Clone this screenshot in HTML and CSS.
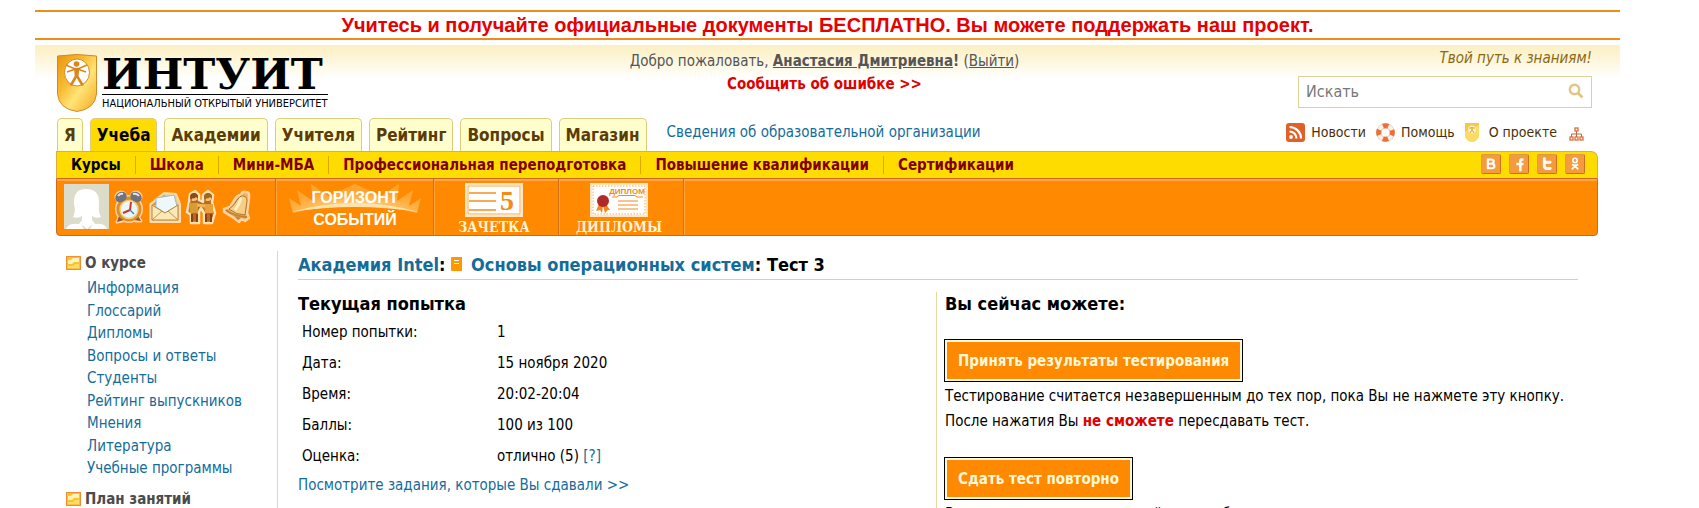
FILE: index.html
```
<!DOCTYPE html>
<html lang="ru">
<head>
<meta charset="utf-8">
<title>ИНТУИТ — Основы операционных систем: Тест 3</title>
<link rel="stylesheet" href="styles.css">
</head>
<body>
<div class="page">
  <a class="promo" href="#">Учитесь и получайте официальные документы БЕСПЛАТНО. Вы можете поддержать наш проект.</a>

  <header class="top">
    <a class="logo" href="#">
      <svg class="logo-shield" viewBox="0 0 40 58" aria-hidden="true">
        <defs>
          <linearGradient id="gold" x1="0" y1="0" x2="1" y2="1">
            <stop offset="0" stop-color="#e8940f"/><stop offset=".35" stop-color="#f9b92f"/>
            <stop offset=".6" stop-color="#ffe477"/><stop offset="1" stop-color="#f6a81c"/>
          </linearGradient>
        </defs>
        <path d="M.5 2Q20-1 39.500 2V40Q38 55 20 57.500Q2 55 .5 40Z" fill="url(#gold)" stroke="#cf8a2c"/>
        <ellipse cx="20" cy="18.500" rx="12.500" ry="13.500" fill="#fff" stroke="#d18a24"/>
        <path d="M9 11L17 14.500H22L30 11M10 18L17 15.500H22L29 18" fill="none" stroke="#d9861c" stroke-width="1.500"/>
        <path d="M17 14H22.500L21.500 22L27 31L24.500 32L19.700 24L15 32L12.500 31L17.700 22Z" fill="#d9861c"/>
        <circle cx="19.500" cy="10" r="2.800" fill="#d9861c"/>
      </svg>
      <span class="logo-text">
        <span class="logo-name">ИНТУИТ</span>
        <span class="logo-sub">НАЦИОНАЛЬНЫЙ ОТКРЫТЫЙ УНИВЕРСИТЕТ</span>
      </span>
    </a>
    <div class="welcome">
      <p>Добро пожаловать, <a href="#"><b>Анастасия Дмитриевна</b></a><b>!</b> (<a href="#">Выйти</a>)</p>
      <p><a class="report" href="#">Сообщить об ошибке &gt;&gt;</a></p>
    </div>
    <div class="tools">
      <p class="slogan">Твой путь к знаниям!</p>
      <form class="search">
        <input type="text" placeholder="Искать" aria-label="Искать">
        <button type="button" aria-label="Найти">
          <svg viewBox="0 0 16 16" width="16" height="16"><circle cx="6.500" cy="6.500" r="4.700" fill="none" stroke="#e3c583" stroke-width="2.400"/><path d="M10 10L14.500 14.500" stroke="#e3c583" stroke-width="2.800"/></svg>
        </button>
      </form>
    </div>
  </header>

  <div class="nav-row">
    <nav class="tabs">
      <a href="#">Я</a><a class="active" href="#">Учеба</a><a href="#">Академии</a><a href="#">Учителя</a><a href="#">Рейтинг</a><a href="#">Вопросы</a><a href="#">Магазин</a>
    </nav>
    <a class="org" href="#">Сведения об образовательной организации</a>
    <nav class="quick">
      <a href="#"><svg viewBox="0 0 19 19" width="19" height="19"><rect width="19" height="19" rx="3" fill="#e0602a"/><circle cx="5" cy="14" r="1.900" fill="#fff"/><path d="M3.500 8.500A7 7 0 0 1 10.500 15.500M3.500 4A11.500 11.500 0 0 1 15 15.500" fill="none" stroke="#fff" stroke-width="2.200"/></svg>Новости</a>
      <a href="#"><svg viewBox="0 0 19 19" width="19" height="19"><circle cx="9.500" cy="9.500" r="6.800" fill="#fff" stroke="#e9b79c" stroke-width="5"/><circle cx="9.500" cy="9.500" r="6.800" fill="none" stroke="#fbf1ea" stroke-width="3.800"/><circle cx="9.500" cy="9.500" r="6.800" fill="none" stroke="#e8713a" stroke-width="5" stroke-dasharray="5.340 5.340" stroke-dashoffset="-2.670" transform="rotate(45 9.500 9.500)"/></svg>Помощь</a>
      <a class="about" href="#"><svg viewBox="0 0 14 19" width="14" height="19"><path d="M0 0H14V13Q13 18 7 19Q1 18 0 13Z" fill="#f5c945"/><path d="M0 9L14 2V13Q13 18 7 19Q1 18 0 13Z" fill="#fbdb65"/><circle cx="7" cy="6.500" r="4" fill="#fff3c4"/><path d="M4 5H10M7 4V7L5 10M7 7L9 10" stroke="#d9a22c" fill="none"/></svg>О проекте</a>
      <a class="map" href="#" aria-label="Карта сайта"><svg viewBox="0 0 15 14" width="15" height="14"><path d="M7.500 4V7M2.500 10V7H12.500V10M7.500 7V10" stroke="#b06a45" fill="none"/><g fill="#fff" stroke="#df6c37" stroke-width="1.300"><rect x="6" y="1" width="3" height="3"/><rect x="1" y="10" width="3" height="3"/><rect x="6" y="10" width="3" height="3"/><rect x="11" y="10" width="3" height="3"/></g></svg></a>
    </nav>
  </div>

  <div class="bar">
    <div class="subnav">
      <nav>
        <a class="active" href="#">Курсы</a><a href="#">Школа</a><a href="#">Мини-МБА</a><a href="#">Профессиональная переподготовка</a><a href="#">Повышение квалификации</a><a href="#">Сертификации</a>
      </nav>
      <div class="social">
        <a href="#" aria-label="ВКонтакте"><svg viewBox="0 0 20 20"><path d="M6.500 5H10Q13 5 13 7.300T10 9.700H6.500ZM6.500 9.700H10.500Q13.800 9.700 13.800 12.200T10.500 14.700H6.500Z" fill="none" stroke="#fff" stroke-width="2.400"/></svg></a>
        <a href="#" aria-label="Facebook"><svg viewBox="0 0 20 20"><path d="M15 5H13Q11.500 5 11.500 7V18M7 10H15" fill="none" stroke="#fff" stroke-width="2.800"/></svg></a>
        <a href="#" aria-label="Twitter"><svg viewBox="0 0 20 20"><path d="M7 4V12Q7 15 10 15H13.500M7 8H13.500" fill="none" stroke="#fff" stroke-width="3.200" stroke-linecap="round"/></svg></a>
        <a href="#" aria-label="Одноклассники"><svg viewBox="0 0 20 20"><circle cx="10" cy="6" r="2.400" fill="none" stroke="#fff" stroke-width="1.800"/><path d="M6.500 10.500Q10 12.500 13.500 10.500M10 12L6.500 16M10 12L13.500 16" fill="none" stroke="#fff" stroke-width="1.900"/></svg></a>
      </div>
    </div>
    <div class="panel">
      <div class="cell user">
        <svg class="avatar" viewBox="0 0 45 45"><rect width="45" height="45" fill="#dddbc9"/><path d="M9 33Q12 28 10 20Q9 5 22 5Q36 5 35 20Q34 28 37 33Q31 35 28 32V36L31 40Q41 39 43 45H2Q4 39 15 40L18 36V32Q14 35 9 33Z" fill="#fff"/><path d="M17 40L23 45L29 40L26 45H20Z" fill="#dddbc9"/></svg>
        <svg class="ico" viewBox="0 0 32 36"><g stroke="#ffd2a0" stroke-width="3" stroke-linejoin="round" fill="#ffd2a0"><circle cx="8" cy="8" r="5"/><circle cx="23" cy="8" r="5"/><path d="M6 28L4 33L10 32M25 28L28 32L22 32"/><circle cx="16" cy="20" r="12.500"/></g><path d="M6 27L4 33L11 31M25 27L28 32L21 31" fill="#8f5a2a"/><circle cx="16" cy="20" r="12.500" fill="#d98e2c"/><ellipse cx="8" cy="8" rx="6" ry="5" fill="#6d7480" transform="rotate(-35 8 8)"/><ellipse cx="23" cy="8" rx="6" ry="5" fill="#6d7480" transform="rotate(35 23 8)"/><circle cx="16" cy="20.500" r="9" fill="#e9f7f9" stroke="#f6cc7a" stroke-width="1.500"/><path d="M18 13L17 21L10 24" fill="none" stroke="#d0342a" stroke-width="2"/><path d="M17 21L21 25" stroke="#4e85b5" stroke-width="1.500"/><path d="M5 7Q7 4 10 5M20 5Q24 4 26 7" stroke="#dfe6ec" stroke-width="2" fill="none"/></svg>
        <svg class="ico" viewBox="0 0 32 36"><path d="M1.500 15L15 4L27 5L31 15V33H1.500Z" fill="#f4c98a" stroke="#ffdcae" stroke-width="2" stroke-linejoin="round"/><path d="M3 16L15 6L29 16Z" fill="#c88d45"/><path d="M7 9L25 6L28 17L16 24L7 18Z" fill="#eef7fa" stroke="#9dbccb"/><path d="M3 16L16 24L29 16V31H3Z" fill="#fbe9b8" stroke="#b9833f"/><path d="M3 31L13 22M29 31L19 22" stroke="#c99345"/></svg>
        <svg class="ico" viewBox="0 0 32 36"><path d="M4 13L5 5L10 2L14 6V11L18 13V6L23 2L28 6L27 13L30 24L27 34H19V24L16 19L14 23V34H6V26L2 23Z" fill="#b66b20" stroke="#ffe3b5" stroke-width="2.500" stroke-linejoin="round"/><circle cx="9" cy="8" r="4" fill="#8b4a19"/><circle cx="23" cy="8" r="4" fill="#a3661b"/><path d="M4 14H13V24H5Z" fill="#d99c33"/><path d="M19 15H28V24H20Z" fill="#eda03a"/><path d="M12 16L20 17" stroke="#f3b45d" stroke-width="3"/><path d="M7 25V33M12 25V33M21 25V33M26 25V33" stroke="#8f3d12" stroke-width="2"/><path d="M7 10Q9 12 12 9M21 10Q23 12 26 9" stroke="#f3c37b" stroke-width="2.500" fill="none"/></svg>
        <svg class="ico" viewBox="0 0 32 36"><path d="M20 6Q21 2 25 3Q29 3 28 9L26 24L28 29L24 32L20 30L18 33L13 29L3 23L3 20L9 18L14 10Q16 6 20 6Z" fill="#e9b565" stroke="#ffd3a0" stroke-width="2.500" stroke-linejoin="round"/><path d="M20 7Q26 6 26 12L24 26Q15 26 8 20Q14 16 16 11Z" fill="#f6cf85" stroke="#b0722e"/><path d="M20 9Q18 16 14 21" stroke="#fff1c4" fill="none" stroke-width="3"/><path d="M5 21Q14 28 26 28" stroke="#c3832f" fill="none" stroke-width="2"/><path d="M13 27L17 31L20 29" fill="#c58234"/></svg>
      </div>
      <a class="cell horizon" href="#">
        <svg viewBox="0 0 136 50" aria-label="Горизонт событий"><defs><radialGradient id="ray" cx=".5" cy=".9" r=".6"><stop offset=".3" stop-color="#ffcf7d"/><stop offset="1" stop-color="#ffc15e" stop-opacity=".5"/></radialGradient></defs><path d="M6 31L2 16L14 24L10 8L26 19L24 2L42 14L68 2L94 14L112 2L110 19L126 8L122 24L134 16L130 31Q68 16 6 31Z" fill="url(#ray)"/><path d="M4 30Q68 12 132 30Q68 20 4 30Z" fill="#ffe3ad"/><g class="horizon-text"><text x="68" y="21" text-anchor="middle">ГОРИЗОНТ</text><text x="68" y="43" text-anchor="middle">СОБЫТИЙ</text></g></svg>
      </a>
      <a class="cell card" href="#">
        <svg viewBox="0 0 58 34"><rect x="1" y="1" width="56" height="32" fill="#fff" stroke="#ffe7c4" stroke-width="2"/><rect x="3" y="3" width="52" height="28" fill="none" stroke="#ffa640"/><path d="M4 10H31M4 18H31M4 27H31" stroke="#f58d1d" stroke-width="1.500"/><text x="42" y="27" class="mark" text-anchor="middle">5</text></svg>
        <span>ЗАЧЕТКА</span>
      </a>
      <a class="cell card" href="#">
        <svg viewBox="0 0 58 34"><rect x="1" y="1" width="56" height="32" fill="#fff" stroke="#ffe7c4" stroke-width="2"/><rect x="3" y="3" width="52" height="28" fill="none" stroke="#f5a957" stroke-dasharray="1.500 1.500"/><text x="37" y="11" class="diploma" text-anchor="middle">ДИПЛОМ</text><path d="M22 14H27L29 12.500H45L47 14H53M28 18H48M28 22H48M28 26H48" fill="none" stroke="#f08a1d"/><path d="M9 21L6 28L10 27L12 30L13 23L15 30L18 27L20 27L16 21Z" fill="#f08a1d"/><circle cx="13" cy="18" r="6" fill="#b02a2a"/></svg>
        <span>ДИПЛОМЫ</span>
      </a>
    </div>
  </div>

  <div class="content">
    <aside class="side">
      <h2><svg viewBox="0 0 15 14"><use href="#folder"/></svg>О курсе</h2>
      <ul>
        <li><a href="#">Информация</a></li>
        <li><a href="#">Глоссарий</a></li>
        <li><a href="#">Дипломы</a></li>
        <li><a href="#">Вопросы и ответы</a></li>
        <li><a href="#">Студенты</a></li>
        <li><a href="#">Рейтинг выпускников</a></li>
        <li><a href="#">Мнения</a></li>
        <li><a href="#">Литература</a></li>
        <li><a href="#">Учебные программы</a></li>
      </ul>
      <h2><svg viewBox="0 0 15 14"><g id="folder"><rect x=".5" y=".5" width="14" height="13" fill="#f9c22f" stroke="#ee8f35"/><path d="M2 8V4H5L7 2H13V6H8L6 8Z" fill="#fff3b5"/><path d="M2 12V10H7L9 8H13V12Z" fill="#fbdc6c"/></g></svg>План занятий</h2>
    </aside>
    <main class="main">
      <h1><a href="#">Академия Intel</a>: <svg viewBox="0 0 11 14"><path d="M1 0H11V14H1Q0 14 0 13V1Q0 0 1 0Z" fill="#ff9800"/><path d="M3 3.500H8M3 6.500H8" stroke="#fff"/></svg><a href="#">Основы операционных систем</a>: Тест 3</h1>
      <div class="columns">
        <section class="attempt">
          <h2>Текущая попытка</h2>
          <table>
            <tr><th scope="row">Номер попытки:</th><td>1</td></tr>
            <tr><th scope="row">Дата:</th><td>15 ноября 2020</td></tr>
            <tr><th scope="row">Время:</th><td>20:02-20:04</td></tr>
            <tr><th scope="row">Баллы:</th><td>100 из 100</td></tr>
            <tr><th scope="row">Оценка:</th><td>отлично (5) <a href="#">[?]</a></td></tr>
          </table>
          <a href="#">Посмотрите задания, которые Вы сдавали &gt;&gt;</a>
        </section>
        <section class="actions">
          <h2>Вы сейчас можете:</h2>
          <button type="button">Принять результаты тестирования</button>
          <p>Тестирование считается незавершенным до тех пор, пока Вы не нажмете эту кнопку.<br>После нажатия Вы <b>не сможете</b> пересдавать тест.</p>
          <button type="button">Сдать тест повторно</button>
          <p>Вы можете пересдать данный тест любое число раз.</p>
        </section>
      </div>
    </main>
  </div>
</div>
</body>
</html>
```
FILE: styles.css
```
* { box-sizing: border-box; }
html, body { height: 100%; }
body {
  margin: 0;
  overflow: hidden;
  background: #fff;
  color: #000;
  font: 15px/1.5 "DejaVu Sans Condensed", "Noto Sans", sans-serif;
}
a { color: #146c9b; text-decoration: none; }
p, h1, h2, ul { margin: 0; padding: 0; }
ul { list-style: none; }
svg { display: block; flex: none; }
.page { padding: 10px 79px 0 35px; }

.promo {
  display: block;
  border: solid #ef8c1c;
  border-width: 2px 0;
  color: #e60000;
  font: bold 20px/26px "Liberation Sans", Arial, sans-serif;
  text-align: center;
}

.top {
  display: grid;
  grid-template-columns: 1fr auto 1fr;
  height: 68px;
  margin-top: 5px;
  padding: 4px 28px 0 22px;
  background: linear-gradient(#fcefc0, #fff 34px);
}
.logo { display: flex; gap: 5px; padding-top: 5px; color: #000; }
.logo-shield { width: 40px; height: 58px; }
.logo-text { display: flex; flex-direction: column; white-space: nowrap; }
.logo-name {
  border-bottom: 1px solid #000;
  font: bold 43px/40px "DejaVu Serif", serif;
}
.logo-sub { font-size: 11px; line-height: 18px; }
.welcome { padding-top: 1px; color: #555; text-align: center; }
.welcome a { color: #555; text-decoration: underline; }
.welcome .report { color: #e00000; font-weight: bold; text-decoration: none; }
.tools { justify-self: end; width: 294px; }
.slogan { color: #8a6914; font-style: italic; line-height: 18px; text-align: right; }
.search {
  display: flex;
  align-items: center;
  height: 32px;
  margin-top: 9px;
  border: 1px solid #e0d296;
  background: #fff;
}
.search input {
  flex: 1;
  min-width: 0;
  padding: 0 7px;
  border: 0;
  outline: 0;
  background: none;
  font: inherit;
  font-size: 16px;
}
.search input::placeholder { color: #777; opacity: 1; }
.search button { padding: 0 7px 2px; border: 0; background: none; }

.nav-row { display: flex; align-items: flex-end; height: 38px; padding: 0 36px 0 22px; }
.tabs { display: flex; gap: 7px; }
.tabs a {
  height: 33px;
  padding: 0 6px;
  border: 1px solid #e0ca7c;
  border-bottom: 0;
  border-radius: 5px 5px 0 0;
  background: #ffffcd;
  color: #5b3c06;
  font-size: 17px;
  font-weight: bold;
  line-height: 32px;
}
.tabs .active { background: #ffdc00; color: #000; }
.org { align-self: center; margin-left: 20px; }
.quick { display: flex; align-items: center; align-self: center; gap: 10px; margin-left: auto; }
.quick a { display: flex; align-items: center; gap: 6px; color: #4b3006; font-size: 14px; }
.quick .about { gap: 10px; }
.quick .map { padding: 4px 0 0 2px; }

.bar { margin: 0 22px 0 21px; }
.subnav {
  display: flex;
  justify-content: space-between;
  height: 27px;
  border: 1px solid #d8b23c;
  border-bottom: 0;
  border-top-right-radius: 7px;
  background: #ffdc00;
}
.subnav nav { display: flex; align-items: center; }
.subnav nav a {
  padding: 0 14px;
  border-left: 1px solid #dba800;
  color: #800000;
  font-weight: bold;
  line-height: 18px;
}
.subnav nav .active { border: 0; color: #000; }
.social { display: flex; gap: 8px; padding: 2px 12px 0 0; }
.social a { width: 20px; height: 20px; border: 1px solid #e39a3c; border-right-color: #cf6f24; border-bottom-color: #cf6f24; border-radius: 2px; background: #f59a3d; }
.panel {
  display: flex;
  height: 58px;
  border: 1px solid #cb6b1f;
  border-radius: 0 0 4px 4px;
  background: #ff8900;
  box-shadow: inset 0 2px #ffa53d;
}
.cell { border-right: 1px solid #d66f13; box-shadow: 1px 0 #ffa53d; }
.user { display: flex; gap: 4px; width: 219px; padding: 5px 7px; }
.avatar { width: 45px; height: 45px; }
.ico { width: 32px; height: 36px; margin-top: 5px; }
.horizon { display: flex; align-items: center; justify-content: center; width: 158px; }
.horizon svg { width: 136px; height: 50px; }
.horizon-text { fill: #fff; font: bold 16px "Liberation Sans", sans-serif; }
.card { display: flex; flex-direction: column; align-items: center; width: 125px; padding: 4px 4px 0 0; color: #fff4d8; font: bold 14px/20px "DejaVu Serif Condensed", "DejaVu Serif", serif; }
.card svg { width: 58px; height: 34px; }
.mark { fill: #f58a14; font: bold 28px "Liberation Serif", serif; }
.diploma { fill: #f08a1d; font: bold 8px "Liberation Sans", sans-serif; }

.content { display: flex; padding: 15px 42px 0 31px; }
.side { flex: 0 0 212px; height: 320px; border-right: 1px solid #e6d8a0; }
.side h2 { display: flex; align-items: center; gap: 4px; color: #4b4b4b; font-size: 15px; line-height: 24px; }
.side h2 svg { width: 15px; height: 14px; }
.side ul { padding-left: 21px; margin: 2px 0 7px; }
.main { flex: 1; padding-left: 20px; }
.main h1, .main h2 { font-size: 18px; line-height: 24px; }
.main h1 { padding: 2px 0; border-bottom: 1px solid #e0d296; }
.main h1 svg { display: inline-block; width: 11px; height: 14px; margin-right: 9px; }
.columns { display: grid; grid-template-columns: 319fr 321fr; margin-top: 12px; }
.attempt table { margin: 1px 0 2px; border-spacing: 0; }
.attempt th, .attempt td { height: 31px; padding: 0 4px; font-weight: normal; text-align: left; }
.attempt th { width: 195px; }
.actions { height: 300px; padding-left: 8px; border-left: 1px solid #e6d8a0; }
.actions h2 { margin-bottom: 24px; }
.actions button {
  display: block;
  height: 41px;
  padding: 0 11px;
  border: 2px solid #fff8dc;
  outline: 1px solid #000;
  background: #ff8900;
  color: #fff8d8;
  font: bold 15px/20px "DejaVu Sans Condensed", "Noto Sans", sans-serif;
}
.actions p { margin: 3px 0 24px; line-height: 25px; }
.actions b { color: #e00000; }
```
